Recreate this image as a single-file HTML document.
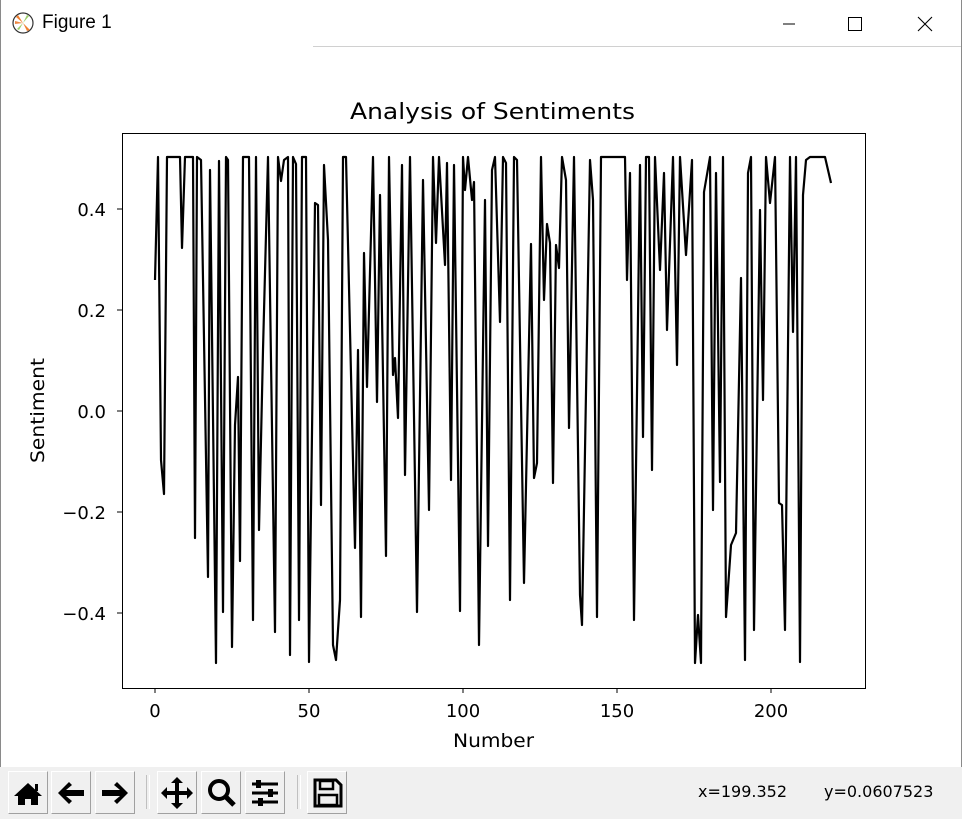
<!DOCTYPE html>
<html><head><meta charset="utf-8"><style>
html,body{margin:0;padding:0;background:#fff;}
body{width:962px;height:819px;position:relative;overflow:hidden;font-family:"DejaVu Sans","Liberation Sans",sans-serif;}
.tb{position:absolute;left:0;top:767px;width:962px;height:52px;background:#f0f0f0;}
.btn{position:absolute;top:4px;width:40px;height:43px;background:#f0f0f0;border:1px solid #fff;border-right-color:#a0a0a0;border-bottom-color:#a0a0a0;box-sizing:border-box;}
.sep{position:absolute;top:8px;width:2px;height:34px;border-left:1px solid #c0c0c0;border-right:1px solid #fff;}
.coord{position:absolute;top:15px;font-size:16px;color:#000;}
</style></head><body>
<div style="position:absolute;left:0;top:0;width:962px;height:47px;background:#fff;"></div>
<div style="position:absolute;left:313px;top:46px;width:649px;height:1px;background:#d0d0d0;"></div>
<div style="position:absolute;left:0;top:0;width:1px;height:819px;background:#8a8a8a;"></div>
<div style="position:absolute;left:961px;top:0;width:1px;height:819px;background:#8a8a8a;"></div>
<svg style="position:absolute;left:12px;top:12px" width="22" height="22" viewBox="0 0 22 22">
<circle cx="11" cy="11" r="10" fill="#fff" stroke="#333" stroke-width="1.2"/>
<path d="M11 11 L4 5 L6 3Z" fill="#f08030"/><path d="M11 11 L18 18 L15 19Z" fill="#f08030"/>
<path d="M11 11 L15 3 L17 4Z" fill="#9c6"/><path d="M11 11 L7 18 L5 17Z" fill="#9c6"/>
<path d="M11 11 L3 12 L3 9Z" fill="#e84"/></svg>
<div style="position:absolute;left:42px;top:12px;font-family:'Liberation Sans',sans-serif;font-size:19px;color:#000;">Figure 1</div>
<svg style="position:absolute;left:780px;top:16px" width="170" height="16">
<line x1="3" y1="8" x2="15" y2="8" stroke="#000" stroke-width="1"/>
<rect x="68.5" y="1.5" width="13" height="13" fill="none" stroke="#000"/>
<path d="M138 1 L152 15 M152 1 L138 15" stroke="#000" stroke-width="1.1"/>
</svg>
<svg style="position:absolute;left:0;top:0" width="962" height="767" font-family="DejaVu Sans, Liberation Sans, sans-serif">
<text x="350" y="119" font-size="22" textLength="285" lengthAdjust="spacingAndGlyphs">Analysis of Sentiments</text>
<rect x="122.5" y="133.5" width="743" height="555" fill="none" stroke="#000" stroke-width="1"/>
<g stroke="#000" stroke-width="1">
<line x1="155" y1="688" x2="155" y2="693"/><line x1="309" y1="688" x2="309" y2="693"/><line x1="463" y1="688" x2="463" y2="693"/><line x1="617" y1="688" x2="617" y2="693"/><line x1="771" y1="688" x2="771" y2="693"/>
<line x1="117" y1="209" x2="122" y2="209"/><line x1="117" y1="310" x2="122" y2="310"/><line x1="117" y1="411" x2="122" y2="411"/><line x1="117" y1="512" x2="122" y2="512"/><line x1="117" y1="613" x2="122" y2="613"/>
</g>
<g font-size="18" text-anchor="middle"><text x="155" y="717">0</text><text x="309" y="717">50</text><text x="463" y="717">100</text><text x="617" y="717">150</text><text x="771" y="717">200</text></g>
<g font-size="18" text-anchor="end"><text x="106" y="216">0.4</text><text x="106" y="317">0.2</text><text x="106" y="418">0.0</text><text x="106" y="519">−0.2</text><text x="106" y="620">−0.4</text></g>
<text x="453" y="747" font-size="19" textLength="81" lengthAdjust="spacingAndGlyphs">Number</text>
<text x="0" y="0" font-size="19" textLength="105" lengthAdjust="spacingAndGlyphs" transform="translate(44,463) rotate(-90)">Sentiment</text>
<polyline fill="none" stroke="#000" stroke-width="2.2" stroke-linejoin="round" points="155,280 158,157 161,460 164,494 167,157 180,157 182,248 185,157 193,157 195,538 197,157 201,160 208,577 210,170 216,663 219,161 223,612 226,157 228,160 232,647 235,425 238,377 240,561 243,157 249,157 253,620 256,157 259,530 263,350 268,157 275,632 278,157 281,181 284,160 288,157 290,655 293,157 296,164 299,620 302,157 306,157 309,662 315,203 318,205 321,505 324,165 328,240 333,645 336,660 340,600 343,157 346,157 355,548 358,350 361,617 364,253 367,387 373,157 377,402 380,195 386,556 389,157 393,375 395,358 398,418 402,165 405,475 410,157 417,612 423,180 429,510 433,157 436,243 439,157 445,265 447,163 451,480 454,165 460,611 463,157 465,190 468,157 472,200 474,182 479,645 485,200 488,546 492,170 495,157 500,322 503,157 506,163 510,600 514,157 517,160 524,583 531,244 534,478 537,463 541,157 544,300 547,224 550,243 553,483 556,245 559,268 562,157 566,180 569,428 574,157 580,595 582,625 590,160 593,200 597,617 601,157 603,157 625,157 627,280 630,173 634,620 640,165 643,437 646,157 649,157 652,470 655,157 660,270 664,173 667,330 673,157 677,365 680,157 686,255 692,160 695,663 698,615 701,663 704,192 710,157 713,510 716,173 720,482 723,157 726,617 731,545 736,533 741,278 745,660 748,173 751,157 754,630 760,210 763,400 766,157 770,203 775,157 779,503 782,505 785,630 790,157 793,332 796,157 800,662 803,195 806,160 810,157 825,157 831,183"/>
</svg>
<div class="tb">
<div class="btn" style="left:8px"><svg width="38" height="41" viewBox="0 0 38 41"><path d="M5 24 L19 11 L33 24 L29 24 L29 33 L22 33 L22 27 L16 27 L16 33 L9 33 L9 24Z" fill="#000"/><rect x="26" y="12" width="3" height="7" fill="#000"/></svg></div>
<div class="btn" style="left:51px"><svg width="38" height="41" viewBox="0 0 38 41"><path d="M6 21 L17 10 L20 13 L14 18 L32 18 L32 24 L14 24 L20 29 L17 32Z" fill="#000"/></svg></div>
<div class="btn" style="left:95px"><svg width="38" height="41" viewBox="0 0 38 41"><path d="M32 21 L21 10 L18 13 L24 18 L6 18 L6 24 L24 24 L18 29 L21 32Z" fill="#000"/></svg></div>
<div class="sep" style="left:146px"></div>
<div class="btn" style="left:157px"><svg width="38" height="41" viewBox="0 0 38 41"><path d="M19 5 L25 11 L21 11 L21 19 L29 19 L29 15 L35 21 L29 27 L29 23 L21 23 L21 31 L25 31 L19 37 L13 31 L17 31 L17 23 L9 23 L9 27 L3 21 L9 15 L9 19 L17 19 L17 11 L13 11Z" fill="#000"/></svg></div>
<div class="btn" style="left:201px"><svg width="38" height="41" viewBox="0 0 38 41"><circle cx="17" cy="18" r="9" fill="none" stroke="#000" stroke-width="4"/><path d="M23 24 L32 33" stroke="#000" stroke-width="5"/></svg></div>
<div class="btn" style="left:245px"><svg width="38" height="41" viewBox="0 0 38 41"><g stroke="#000" stroke-width="3"><line x1="6" y1="12" x2="32" y2="12"/><line x1="6" y1="21" x2="32" y2="21"/><line x1="6" y1="30" x2="32" y2="30"/></g><rect x="10" y="8" width="5" height="8" fill="#000"/><rect x="22" y="17" width="5" height="8" fill="#000"/><rect x="12" y="26" width="5" height="8" fill="#000"/></svg></div>
<div class="sep" style="left:297px"></div>
<div class="btn" style="left:307px"><svg width="38" height="41" viewBox="0 0 38 41"><path d="M7 8 L28 8 L33 13 L33 34 L7 34Z" fill="none" stroke="#000" stroke-width="3"/><rect x="12" y="9" width="13" height="8" fill="none" stroke="#000" stroke-width="2.5"/><rect x="11" y="23" width="18" height="10" fill="none" stroke="#000" stroke-width="2.5"/></svg></div>
<div class="coord" style="left:698px">x=199.352</div>
<div class="coord" style="left:824px">y=0.0607523</div>
</div>
</body></html>
